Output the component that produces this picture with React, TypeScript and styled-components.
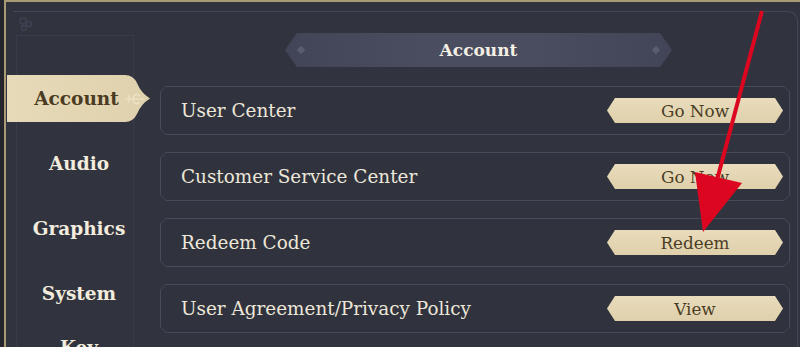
import React from 'react';
import styled, { createGlobalStyle } from 'styled-components';

const GlobalStyle = createGlobalStyle`
    html, body {
        margin: 0;
        padding: 0;
        background: #25262d;
    }
    body {
        width: 800px;
        height: 347px;
        overflow: hidden;
        font-family: 'DejaVu Serif', 'Liberation Serif', serif;
    }
`;

const Screen = styled.div`
    position: relative;
    width: 800px;
    height: 347px;
    overflow: hidden;
    box-sizing: border-box;
    padding-left: 4px;
    background: #25262d;
`;

const Panel = styled.div`
    height: 100%;
    box-sizing: border-box;
    padding: 9px 2px 0 7px;
    background: #31343f;
    border-left: 2px solid #a89b73;
    border-top: 2px solid #a89b73;
`;

const InnerFrame = styled.div`
    position: relative;
    display: flex;
    height: 400px;
    border-top: 1px solid #434756;
    border-right: 1px solid #434756;
    border-top-right-radius: 10px;
`;

const CornerMark = styled.svg`
    position: absolute;
    left: 4px;
    top: 3px;
`;

const Sidebar = styled.nav`
    display: flex;
    flex-direction: column;
    gap: 18px;
    width: 118px;
    flex-shrink: 0;
    box-sizing: border-box;
    margin: 23px 0 0 3px;
    padding-top: 39px;
    border: 1px solid #393c48;
    border-bottom: none;
`;

const NavItem = styled.div`
    display: flex;
    align-items: center;
    justify-content: center;
    height: 47px;
    padding-left: 8px;
    text-align: center;
    font-weight: bold;
    font-size: 18.5px;
    line-height: 23px;
    color: #f2ecdd;
`;

const ActiveTab = styled.div`
    position: relative;
    display: flex;
    align-items: center;
    justify-content: center;
    width: 143px;
    height: 47px;
    margin-left: -10px;
    padding-right: 4px;
    box-sizing: border-box;
    font-weight: bold;
    font-size: 18.5px;
    color: #4a3b22;
    background: linear-gradient(90deg, #e7dab9 0%, #dfd1ac 100%);
    clip-path: path('M0 0 H118 Q126 0 130 8 Q134 18 143 23.5 Q134 29 130 39 Q126 47 118 47 H0 Z');
`;

const TabFlourish = styled.svg`
    position: absolute;
    right: 4px;
    top: 14px;
`;

const Content = styled.main`
    display: flex;
    flex-direction: column;
    flex: 1;
    padding: 21px 7px 0 26px;
`;

const TitleBar = styled.div`
    position: relative;
    display: flex;
    align-items: center;
    justify-content: center;
    width: 387px;
    height: 34px;
    margin-left: 125px;
    font-weight: bold;
    font-size: 17px;
    color: #f4efe4;
    background: linear-gradient(90deg, #424557 0%, #4a4d5f 35%, #4a4d5f 65%, #424557 100%);
    clip-path: polygon(12px 0, calc(100% - 12px) 0, 100% 50%, calc(100% - 12px) 100%, 12px 100%, 0 50%);

    &::before,
    &::after {
        content: '';
        position: absolute;
        top: 14px;
        width: 6px;
        height: 6px;
        background: #5a5d6f;
        transform: rotate(45deg);
    }
    &::before {
        left: 13px;
    }
    &::after {
        right: 13px;
    }
`;

const RowList = styled.div`
    display: flex;
    flex-direction: column;
    gap: 17px;
    margin-top: 19px;
`;

const RowFrame = styled.div`
    height: 49px;
    padding: 1px;
    box-sizing: border-box;
    background: #464a59;
    clip-path: polygon(6px 0, calc(100% - 6px) 0, 100% 6px, 100% calc(100% - 6px), calc(100% - 6px) 100%, 6px 100%, 0 calc(100% - 6px), 0 6px);
`;

const RowBody = styled.div`
    display: flex;
    align-items: center;
    justify-content: space-between;
    height: 100%;
    box-sizing: border-box;
    padding: 0 6px 0 20px;
    background: #30333d;
    clip-path: polygon(5px 0, calc(100% - 5px) 0, 100% 5px, 100% calc(100% - 5px), calc(100% - 5px) 100%, 5px 100%, 0 calc(100% - 5px), 0 5px);
`;

const RowLabel = styled.span`
    font-size: 18.4px;
    color: #ede7d9;
`;

const ActionButton = styled.button`
    width: 176px;
    height: 25px;
    padding: 0;
    border: none;
    font-family: 'DejaVu Serif', 'Liberation Serif', serif;
    font-size: 16.8px;
    color: #4b3d25;
    background: linear-gradient(180deg, #e9dcbc 0%, #dfd0ab 100%);
    clip-path: polygon(8px 0, calc(100% - 8px) 0, 100% 50%, calc(100% - 8px) 100%, 8px 100%, 0 50%);
`;

const Annotation = styled.svg`
    position: absolute;
    left: 0;
    top: 0;
    pointer-events: none;
`;

const navItems = ['Audio', 'Graphics', 'System', 'Key Bindings'];

const rows = [
    { label: 'User Center', action: 'Go Now' },
    { label: 'Customer Service Center', action: 'Go Now' },
    { label: 'Redeem Code', action: 'Redeem' },
    { label: 'User Agreement/Privacy Policy', action: 'View' },
];

function App() {
    return (
        <Screen>
            <GlobalStyle />
            <Panel>
                <InnerFrame>
                    <CornerMark width="20" height="20" viewBox="0 0 20 20">
                        <circle cx="6" cy="6" r="3" fill="none" stroke="#3e4151" strokeWidth="1.5" />
                        <circle cx="12" cy="9" r="2.5" fill="none" stroke="#3e4151" strokeWidth="1.5" />
                        <circle cx="7" cy="13" r="2.5" fill="none" stroke="#3e4151" strokeWidth="1.5" />
                    </CornerMark>
                    <Sidebar>
                        <ActiveTab>
                            Account
                            <TabFlourish width="22" height="20" viewBox="0 0 22 20">
                                <path d="M1 10 H20 M9 10 C9 5 14 4 15 7 M9 10 C9 15 14 16 15 13 M4 6 C6 8 6 12 4 14" fill="none" stroke="#efe5cb" strokeWidth="1.1" />
                            </TabFlourish>
                        </ActiveTab>
                        {navItems.map((item) => (
                            <NavItem key={item}>{item}</NavItem>
                        ))}
                    </Sidebar>
                    <Content>
                        <TitleBar>Account</TitleBar>
                        <RowList>
                            {rows.map((row) => (
                                <RowFrame key={row.label}>
                                    <RowBody>
                                        <RowLabel>{row.label}</RowLabel>
                                        <ActionButton>{row.action}</ActionButton>
                                    </RowBody>
                                </RowFrame>
                            ))}
                        </RowList>
                    </Content>
                </InnerFrame>
            </Panel>
            <Annotation width="800" height="347" viewBox="0 0 800 347">
                <line x1="762" y1="11" x2="717" y2="180" stroke="#dc0620" strokeWidth="4" />
                <polygon points="695,172 742,183 703,232" fill="#dc0620" />
            </Annotation>
        </Screen>
    );
}

export default App;
